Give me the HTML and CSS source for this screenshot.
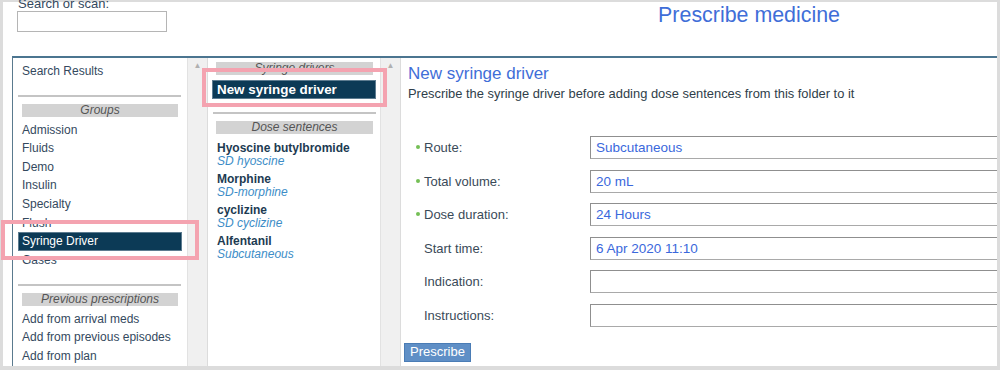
FILE: index.html
```html
<!DOCTYPE html>
<html lang="en">
<head>
<meta charset="UTF-8" />
<title>Prescribe medicine</title>
<link rel="stylesheet" href="styles.css">
</head>
<body>
<div class="frame">
  <header class="top">
    <div class="search">
      <label for="search">Search or scan:</label>
      <input type="text" id="search" />
    </div>
    <h1>Prescribe medicine</h1>
  </header>

  <main class="panel">
    <nav class="col groups">
      <div class="item">Search Results</div>
      <hr />
      <div class="bar">Groups</div>
      <div class="item">Admission</div>
      <div class="item">Fluids</div>
      <div class="item">Demo</div>
      <div class="item">Insulin</div>
      <div class="item">Specialty</div>
      <div class="item">Flush</div>
      <div class="item selected">Syringe Driver</div>
      <div class="item">Gases</div>
      <hr />
      <div class="bar">Previous prescriptions</div>
      <div class="item">Add from arrival meds</div>
      <div class="item">Add from previous episodes</div>
      <div class="item">Add from plan</div>
    </nav>
    <div class="scroll"><span class="arrow">&#9650;</span></div>

    <section class="col folder">
      <div class="bar">Syringe drivers</div>
      <div class="item selected">New syringe driver</div>
      <hr />
      <div class="bar">Dose sentences</div>
      <div class="drug"><b>Hyoscine butylbromide</b><i>SD hyoscine</i></div>
      <div class="drug"><b>Morphine</b><i>SD-morphine</i></div>
      <div class="drug"><b>cyclizine</b><i>SD cyclizine</i></div>
      <div class="drug"><b>Alfentanil</b><i>Subcutaneous</i></div>
    </section>
    <div class="scroll"><span class="arrow">&#9650;</span></div>

    <section class="col detail">
      <h2>New syringe driver</h2>
      <p class="hint">Prescribe the syringe driver before adding dose sentences from this folder to it</p>
      <div class="form">
        <div class="row"><label class="req">Route:</label><div class="field">Subcutaneous</div></div>
        <div class="row"><label class="req">Total volume:</label><div class="field">20 mL</div></div>
        <div class="row"><label class="req">Dose duration:</label><div class="field">24 Hours</div></div>
        <div class="row"><label>Start time:</label><div class="field">6 Apr 2020 11:10</div></div>
        <div class="row"><label>Indication:</label><div class="field"></div></div>
        <div class="row"><label>Instructions:</label><div class="field"></div></div>
      </div>
      <button class="btn">Prescribe</button>
    </section>
  </main>

  <!-- highlight boxes over the selected entries -->
  <div class="mark mark-group"></div>
  <div class="mark mark-folder"></div>
</div>
</body>
</html>
```

FILE: styles.css
```css
html, body {
  margin: 0;
  padding: 0;
  overflow: hidden;
}
body {
  width: 1000px;
  height: 370px;
  font-family: "Liberation Sans", Arial, sans-serif;
  font-size: 12px;
  color: #34495e;
  background: #fff;
}
.frame {
  position: relative;
  box-sizing: border-box;
  width: 1000px;
  height: 370px;
  border: 3px solid #dcdcdc;
  border-top-width: 2px;
  border-bottom-width: 4px;
  display: flex;
  flex-direction: column;
}

/* header */
.top {
  height: 54px;
  flex-shrink: 0;
  display: flex;
  align-items: flex-start;
}
.search {
  padding-left: 14px;
  width: 160px;
  display: flex;
  flex-direction: column;
}
.search label {
  font-size: 13px;
  color: #34495e;
  line-height: 14px;
  margin-top: -5px;
  padding-left: 1px;
}
.search input {
  box-sizing: border-box;
  width: 150px;
  height: 21px;
  margin: 0;
  border: 1px solid #b5b5b5;
}
h1 {
  margin: 1px 157px 0 auto;
  font-size: 21.4px;
  font-weight: normal;
  color: #3f6ed8;
  line-height: 24px;
}

/* main panel */
.panel {
  flex: 1;
  margin-left: 9px;
  border-top: 2px solid #4b7590;
  border-left: 1px solid #5a7a8e;
  display: flex;
  overflow: hidden;
}
.col {
  background: #fff;
  flex-shrink: 0;
}
.scroll {
  flex-shrink: 0;
  width: 19px;
  background: #f0f0f0;
  border-left: 1px solid #e2e2e2;
  text-align: center;
}
.arrow {
  display: block;
  font-size: 8px;
  color: #b0b0b0;
  margin-top: 3px;
  line-height: 10px;
}
hr {
  border: none;
  border-top: 2px solid #c4c4c4;
  margin: 0;
}
.bar {
  background: #d3d3d3;
  color: #555;
  font-style: italic;
  text-align: center;
  line-height: 13px;
  font-size: 12px;
}
.item {
  line-height: 18.6px;
  padding-left: 9px;
}
.item.selected {
  background: #0c3a56;
  color: #fff;
  border: 1px solid #5d7c90;
  line-height: 17px;
  padding-left: 3px;
}

.groups {
  width: 174px;
  padding-top: 4px;
}
.groups hr {
  margin: 13px 6px 7px 5px;
}
.groups hr + .bar {
  margin-bottom: 4px;
}
.groups .item + hr {
  margin-top: 14px;
}
.groups .bar {
  margin: 0 9px 4px 9px;
}
.groups .item.selected {
  margin: 0 5px 0 5px;
}

.folder {
  width: 172px;
  border-left: 1px solid #dcdcdc;
  padding-top: 4px;
}
.folder .bar {
  margin: 0 7px 0 8px;
}
.folder .item.selected {
  margin: 5px 4px 0 4px;
  padding-left: 4px;
  font-weight: bold;
  font-size: 13.4px;
}
.folder hr {
  margin: 13px 4px 7px 5px;
}
.folder .bar + .drug {
  margin-top: 8px;
}
.drug {
  padding-left: 9px;
  margin-bottom: 5px;
}
.drug b {
  display: block;
  color: #1d3b52;
  line-height: 13px;
}
.drug i {
  display: block;
  color: #3c8dc7;
  line-height: 13px;
}

.detail {
  flex: 1;
  min-width: 0;
  border-left: 1px solid #dcdcdc;
  padding: 6px 0 0 7px;
}
h2 {
  margin: 0;
  font-size: 17px;
  font-weight: normal;
  color: #3f6ed8;
  line-height: 20px;
}
.hint {
  margin: 2px 0 0 0;
  font-size: 12.9px;
  color: #2f3e4a;
  line-height: 15px;
}
.form {
  margin-top: 35px;
  display: flex;
  flex-direction: column;
  gap: 10.6px;
}
.row {
  display: flex;
  align-items: center;
}
.row label {
  flex-shrink: 0;
  width: 182px;
  padding-left: 16px;
  box-sizing: border-box;
  font-size: 13px;
  color: #3a4a58;
  position: relative;
}
.row label.req::before {
  content: "";
  position: absolute;
  left: 8px;
  top: 5px;
  width: 4px;
  height: 4px;
  border-radius: 50%;
  background: #74bf55;
}
.field {
  flex-shrink: 0;
  box-sizing: border-box;
  width: 420px;
  height: 23px;
  border: 1px solid #a9a9a9;
  border-top-color: #8f8f8f;
  border-left-color: #8f8f8f;
  padding-left: 5px;
  font-size: 13.5px;
  line-height: 21px;
  color: #3a68dc;
}
.btn {
  margin: 16px 0 0 -4px;
  padding: 0 5px;
  height: 19px;
  background: #5f8fc6;
  border: 1px solid #4a7cb5;
  color: #fff;
  font-family: "Liberation Sans", Arial, sans-serif;
  font-size: 13px;
  line-height: 16px;
}

/* pink annotation boxes */
.mark {
  position: absolute;
  border: 4px solid #f4a3b0;
}
.mark-group {
  left: -2px;
  top: 218px;
  width: 190px;
  height: 32px;
}
.mark-folder {
  left: 199px;
  top: 66px;
  width: 177px;
  height: 31px;
}
```
